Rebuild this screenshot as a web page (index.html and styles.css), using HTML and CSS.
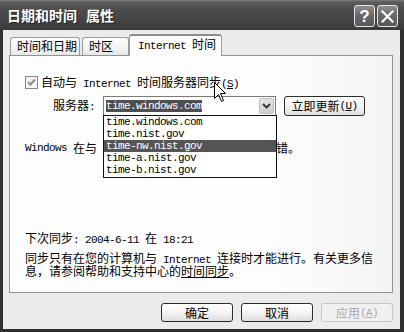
FILE: index.html
```html
<!DOCTYPE html>
<html lang="zh-CN">
<head>
<meta charset="utf-8">
<title>日期和时间 属性</title>
<link rel="stylesheet" href="styles.css">
</head>
<body>
<div class="window">
  <div class="titlebar">
    <span class="title">日期和时间<span class="title-gap">属性</span></span>
    <div class="tb-btns">
      <span class="tb-btn">?</span>
      <span class="tb-btn"><svg width="13" height="13" viewBox="0 0 13 13"><path d="M1.5 1.5 L11.5 11.5 M11.5 1.5 L1.5 11.5" stroke="#fff" stroke-width="2.2" stroke-linecap="square"/></svg></span>
    </div>
  </div>
  <div class="client">
    <div class="tabs">
      <div class="tab t1">时间和日期</div>
      <div class="tab t2">时区</div>
      <div class="tab active"><span class="en">Internet&nbsp;</span>时间</div>
    </div>
    <div class="panel">
      <div class="row auto">
        <span class="check"><svg width="11" height="11" viewBox="0 0 11 11"><path d="M2 5 L4.5 7.5 L9 2.5" fill="none" stroke="#8c8c8c" stroke-width="2"/></svg></span>
        <span>自动与<span class="en">&nbsp;Internet&nbsp;</span>时间服务器同步<span class="en">(<u>S</u>)</span></span>
      </div>
      <div class="row server">
        <span class="label">服务器<span class="en">:</span></span>
        <div class="combo">
          <span class="combo-text en">time.windows.com</span>
          <span class="combo-arrow"><svg width="9" height="6" viewBox="0 0 9 6"><path d="M1 1 L4.5 4.5 L8 1" fill="none" stroke="#333" stroke-width="1.8"/></svg></span>
          <ul class="dropdown en">
            <li>time.windows.com</li>
            <li>time.nist.gov</li>
            <li class="sel">time-nw.nist.gov</li>
            <li>time-a.nist.gov</li>
            <li>time-b.nist.gov</li>
          </ul>
        </div>
        <button class="btn update">立即更新<span class="en">(<u>U</u>)</span></button>
      </div>
      <div class="row status"><span class="en">Windows&nbsp;</span>在与<span class="status-end">错。</span></div>
      <div class="bottom">
        <div class="next">下次同步<span class="en">:&nbsp;2004-6-11&nbsp;</span>在<span class="en">&nbsp;18:21</span></div>
        <div class="note">
          <div class="note-line">同步只有在您的计算机与<span class="en">&nbsp;Internet&nbsp;</span>连接时才能进行。有关更多信</div>
          <div class="note-line">息，请参阅帮助和支持中心的<u>时间同步</u>。</div>
        </div>
      </div>
    </div>
    <div class="buttons">
      <button class="btn dlg">确定</button>
      <button class="btn dlg">取消</button>
      <button class="btn dlg disabled">应用<span class="en">(<u>A</u>)</span></button>
    </div>
  </div>
  <svg class="cursor" width="13" height="21" viewBox="0 0 13 21"><path d="M0.5 0.5 L0.5 16.5 L4.5 12.5 L7.5 19.5 L9.5 18.5 L6.5 11.5 L11.5 11.5 Z" fill="#fff" stroke="#000" stroke-width="1"/></svg>
</div>
</body>
</html>
```

FILE: styles.css
```css
html, body {
  margin: 0;
  padding: 0;
  background: #fff;
}

.window {
  width: 404px;
  height: 332px;
  position: relative;
  display: flex;
  flex-direction: column;
  overflow: hidden;
  background: #2f2f2f;
  font-family: "Noto Sans CJK SC", sans-serif;
  font-size: 12px;
  line-height: 12px;
  color: #000;
}

.en {
  font-family: "Liberation Mono", monospace;
  font-size: 11px;
  letter-spacing: -0.6px;
  line-height: 12px;
}

.titlebar {
  height: 30px;
  flex: none;
  display: flex;
  align-items: center;
  justify-content: space-between;
  padding: 0 6px 0 7px;
  background: linear-gradient(#7c7c7c 0, #5c5c5c 2px, #4e4e4e 8px, #464646 60%, #3a3a3a 100%);
}

.title {
  color: #fff;
  font-weight: bold;
  font-size: 14px;
  line-height: 14px;
  text-shadow: 1px 1px 0 #222;
}

.title-gap {
  margin-left: 9px;
}

.tb-btns {
  display: flex;
  gap: 2px;
  margin-top: 2px;
}

.tb-btn {
  width: 21px;
  height: 22px;
  box-sizing: border-box;
  border: 1px solid #e6e6e6;
  border-radius: 3px;
  background: linear-gradient(#8e8e8e, #666 50%, #585858);
  color: #fff;
  display: flex;
  align-items: center;
  justify-content: center;
  font-family: "Liberation Sans", sans-serif;
  font-weight: bold;
  font-size: 17px;
  line-height: 17px;
}

.client {
  flex: 1;
  margin: 0 4px 3px 3px;
  padding: 4px 7px 7px 6px;
  background: #ebebeb;
  display: flex;
  flex-direction: column;
}

.tabs {
  display: flex;
  align-items: flex-end;
  height: 22px;
  margin: 0 0 -1px 1px;
}

.tab {
  box-sizing: border-box;
  height: 19px;
  border: 1px solid #9a9a9a;
  border-bottom: none;
  border-radius: 3px 3px 0 0;
  background: linear-gradient(#fefefe, #f2f2f2 60%, #e4e4e4);
  padding: 2px 0 0 6px;
  white-space: nowrap;
}

.t1 {
  width: 70px;
  margin-right: 2px;
}

.t2 {
  width: 47px;
}

.tab.active {
  width: 93px;
  height: 22px;
  padding: 2px 0 0 8px;
  border-top: 2px solid #8c8c8c;
  background: #fcfcfc;
  position: relative;
  z-index: 1;
}

.panel {
  flex: none;
  height: 238px;
  box-sizing: border-box;
  border: 1px solid #919191;
  background: linear-gradient(90deg, #fdfdfd 70%, #f4f4f4);
  padding: 20px 0 15px 15px;
  display: flex;
  flex-direction: column;
}

.row {
  display: flex;
  align-items: center;
  white-space: nowrap;
}

.auto {
  height: 13px;
}

.check {
  width: 13px;
  height: 13px;
  box-sizing: border-box;
  border: 1px solid #8a8a8a;
  background: #f3f3f3;
  margin-right: 3px;
  display: flex;
  align-items: center;
  justify-content: center;
}

.server {
  margin-top: 7px;
  height: 20px;
}

.label {
  padding-left: 28px;
  width: 42px;
}

.combo {
  position: relative;
  margin-left: 8px;
  width: 173px;
  height: 20px;
  box-sizing: border-box;
  border: 1px solid #7a7a7a;
  background: #fff;
  display: flex;
  align-items: center;
  padding-left: 2px;
}

.combo-text {
  background: #4e4e4e;
  color: #fff;
  height: 12px;
}

.combo-arrow {
  margin-left: auto;
  margin-right: 1px;
  width: 15px;
  height: 16px;
  box-sizing: border-box;
  border: 1px solid #bdbdbd;
  border-radius: 2px;
  background: linear-gradient(#e6e6e6, #cfcfcf);
  display: flex;
  align-items: center;
  justify-content: center;
}

.dropdown {
  position: absolute;
  top: 18px;
  left: -1px;
  width: 174px;
  box-sizing: border-box;
  margin: 0;
  padding: 0 0 1px 0;
  list-style: none;
  border: 1px solid #111;
  background: #fff;
  color: #000;
  z-index: 2;
}

.dropdown li {
  height: 12px;
  padding-left: 2px;
}

.dropdown li.sel {
  background: #555;
  color: #fff;
}

.btn {
  font-family: "Noto Sans CJK SC", sans-serif;
  font-size: 12px;
  line-height: 12px;
  color: #000;
  box-sizing: border-box;
  border: 1px solid #2c2c2c;
  border-radius: 3px;
  background: linear-gradient(#ffffff, #f4f4f4 50%, #dedede);
  padding: 0;
  margin: 0;
  display: flex;
  align-items: center;
  justify-content: center;
}

.update {
  margin-left: 8px;
  width: 81px;
  height: 20px;
}

.status {
  margin-top: 26px;
  height: 12px;
}

.status-end {
  margin-left: 179px;
}

.bottom {
  margin-top: auto;
}

.next {
  height: 12px;
  white-space: nowrap;
}

.note {
  margin-top: 7px;
  white-space: nowrap;
}

.note-line {
  height: 13px;
  line-height: 13px;
}

.buttons {
  margin-top: 10px;
  display: flex;
  justify-content: flex-end;
  gap: 8px;
}

.dlg {
  width: 72px;
  height: 19px;
}

.dlg.disabled {
  border-color: #c6c6c6;
  color: #a8a8a8;
  background: #f0f0f0;
}

.cursor {
  position: absolute;
  left: 214px;
  top: 82px;
  z-index: 3;
}
```
